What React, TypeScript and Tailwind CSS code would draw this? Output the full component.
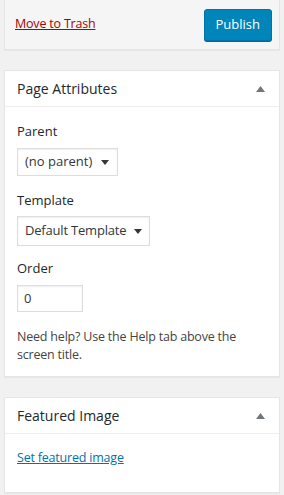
function Caret() {
  return (
    <svg width="8" height="5" viewBox="0 0 8 5" className="ml-auto">
      <path d="M0 0h8L4 5z" fill="#32373c" />
    </svg>
  );
}

function Box({ title, children }: { title: string; children: React.ReactNode }) {
  return (
    <div className="mx-[4px] border border-[#e5e5e5] bg-white shadow-[0_1px_1px_rgba(0,0,0,0.04)]">
      <div className="flex h-[36px] items-center border-b border-[#eee] pl-[12px] pr-[14px]">
        <h2 className="text-[14px] font-medium text-[#23282d]">{title}</h2>
        <svg width="9" height="6" viewBox="0 0 9 6" className="ml-auto">
          <path d="M0 6h9L4.5 0z" fill="#72777c" />
        </svg>
      </div>
      {children}
    </div>
  );
}

export default function App() {
  return (
    <div className="min-h-[495px] bg-[#f1f1f1] pb-2 font-['Open_Sans',sans-serif] text-[13px] text-[#444]">
      {/* publish actions */}
      <div className="mx-[4px] flex h-[50px] items-center justify-between border border-t-0 border-[#e5e5e5] bg-[#f5f5f5] pl-[10px] pr-[7px] shadow-[0_1px_1px_rgba(0,0,0,0.04)]">
        <a href="#" className="text-[12.5px] tracking-[-0.2px] text-[#a00] underline">Move to Trash</a>
        <button className="h-[32px] rounded-[3px] border border-[#0073aa] bg-[#0085ba] px-[11px] text-[13px] text-white shadow-[0_1px_0_#006799]">
          Publish
        </button>
      </div>

      <div className="mt-[20px]">
        <Box title="Page Attributes">
          <div className="px-[12px] pb-[12px] pt-[15px] text-[#32373c]">
            <p className="text-[13px] leading-[18px] font-medium text-[#23282d]">Parent</p>
            <div className="mt-[8px] flex h-[28px] w-[101px] items-center border border-[#ddd] pl-[7px] pr-[8px] shadow-[inset_0_1px_2px_rgba(0,0,0,0.07)]">
              <span>(no parent)</span>
              <Caret />
            </div>
            <p className="mt-[15px] text-[13px] leading-[18px] font-medium text-[#23282d]">Template</p>
            <div className="mt-[7px] flex h-[30px] w-[133px] items-center border border-[#ddd] pl-[7px] pr-[7px] shadow-[inset_0_1px_2px_rgba(0,0,0,0.07)]">
              <span className="tracking-[-0.2px]">Default Template</span>
              <Caret />
            </div>
            <p className="mt-[13px] text-[13px] leading-[18px] font-medium text-[#23282d]">Order</p>
            <div className="mt-[8px] flex h-[27px] w-[66px] items-center border border-[#ddd] pl-[6px] shadow-[inset_0_1px_2px_rgba(0,0,0,0.07)]">
              0
            </div>
            <p className="mt-[16px] text-[12.5px] leading-[18px] tracking-[-0.2px] text-[#444]">
              Need help? Use the Help tab above the screen title.
            </p>
          </div>
        </Box>
      </div>

      <div className="mt-[20px]">
        <Box title="Featured Image">
          <div className="px-[12px] pb-[24px] pt-[14px]">
            <a href="#" className="text-[12.5px] tracking-[-0.2px] text-[#0073aa] underline">Set featured image</a>
          </div>
        </Box>
      </div>
    </div>
  );
}
